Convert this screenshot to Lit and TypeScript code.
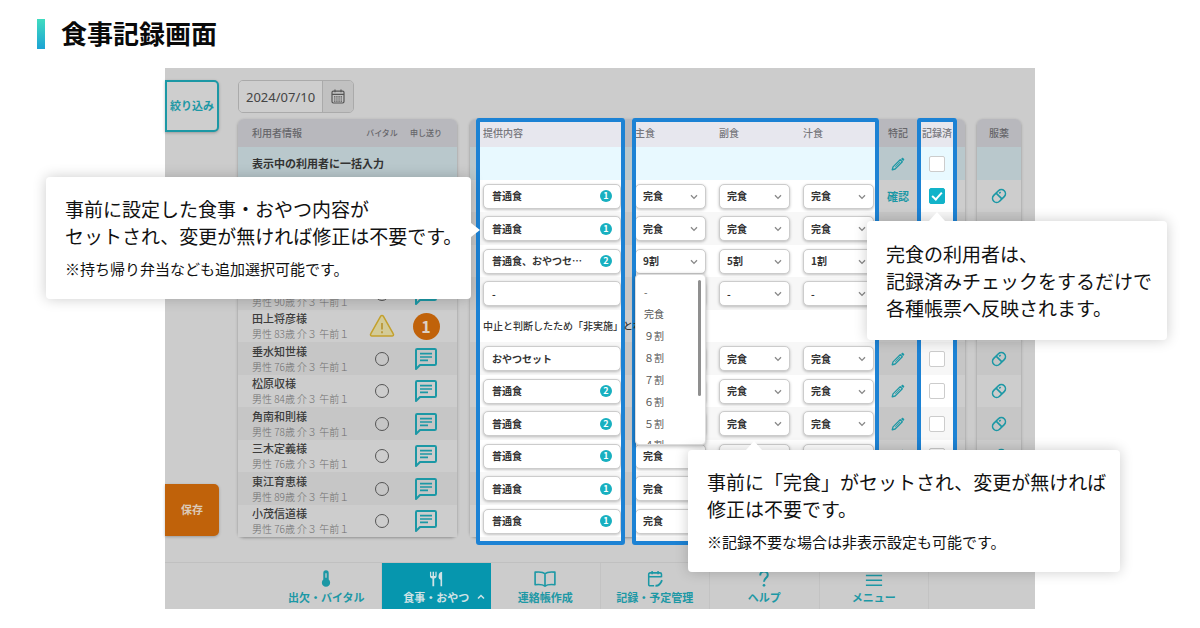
import { LitElement, html, svg, css, nothing } from "lit";
import { customElement, state } from "lit/decorators.js";
import { classMap } from "lit/directives/class-map.js";

type Vital = "normal" | "alert";

interface Resident {
  name: string;
  profile: string;
  vital: Vital;
  unread?: number;
  menu: string;
  menuCount?: number;
  stopped?: boolean;
  amounts: [string, string, string];
  noted?: boolean;
  recorded?: boolean;
}

const residents: Resident[] = [
  { name: "", profile: "", vital: "normal", menu: "普通食", menuCount: 1, amounts: ["完食", "完食", "完食"], noted: true, recorded: true },
  { name: "", profile: "", vital: "normal", menu: "普通食", menuCount: 1, amounts: ["完食", "完食", "完食"] },
  { name: "", profile: "", vital: "normal", menu: "普通食、おやつセ…", menuCount: 2, amounts: ["9割", "5割", "1割"] },
  { name: "", profile: "男性 90歳 介３ 午前１", vital: "normal", menu: "-", amounts: ["-", "-", "-"] },
  { name: "田上将彦様", profile: "男性 83歳 介３ 午前１", vital: "alert", unread: 1, menu: "中止と判断したため「非実施」とな", stopped: true, amounts: ["", "", ""] },
  { name: "垂水知世様", profile: "男性 76歳 介３ 午前１", vital: "normal", menu: "おやつセット", amounts: ["完食", "完食", "完食"] },
  { name: "松原収様", profile: "男性 84歳 介３ 午前１", vital: "normal", menu: "普通食", menuCount: 2, amounts: ["完食", "完食", "完食"] },
  { name: "角南和則様", profile: "男性 78歳 介３ 午前１", vital: "normal", menu: "普通食", menuCount: 2, amounts: ["完食", "完食", "完食"] },
  { name: "三木定義様", profile: "男性 76歳 介３ 午前１", vital: "normal", menu: "普通食", menuCount: 1, amounts: ["完食", "完食", "完食"] },
  { name: "東江育恵様", profile: "男性 89歳 介３ 午前１", vital: "normal", menu: "普通食", menuCount: 1, amounts: ["完食", "完食", "完食"] },
  { name: "小茂信道様", profile: "男性 76歳 介３ 午前１", vital: "normal", menu: "普通食", menuCount: 1, amounts: ["完食", "完食", "完食"] },
];

const dishes = ["主食", "副食", "汁食"];
const menuChoices = ["-", "完食", "９割", "８割", "７割", "６割", "５割", "４割"];
const openRow = 2;

const chevron = html`<svg class="chevron" viewBox="0 0 8 6" aria-hidden="true"><path d="M1 1.2 4 4.4 7 1.2" fill="none" stroke="currentColor" stroke-width="1.3" /></svg>`;

const calendarIcon = html`<svg class="calendar" viewBox="0 0 14 15" aria-hidden="true">
  <rect x="1" y="2.2" width="12" height="11.8" rx="1.4" fill="none" stroke="currentColor" stroke-width="1.2" />
  <path d="M1 5.4h12M4 .6v2.6M10 .6v2.6" stroke="currentColor" stroke-width="1.2" fill="none" />
  <path d="M3 7.9h8M3 10h8M3 12.1h8" stroke="currentColor" stroke-width="1.1" stroke-dasharray="1.4 .8" />
</svg>`;

const chatIcon = html`<svg class="chat" viewBox="0 0 24 24" aria-hidden="true">
  <path d="M2 22V3.2C2 2.5 2.5 2 3.2 2h17.6c.7 0 1.2.5 1.2 1.2v13.6c0 .7-.5 1.200-1.200 1.200H6z" fill="none" stroke="currentColor" stroke-width="2" stroke-linejoin="round" />
  <path d="M6 6.700h12M6 10h12M6 13.300h8" stroke="currentColor" stroke-width="1.700" />
</svg>`;

const warningIcon = html`<svg class="warning" viewBox="0 0 26 24" role="img" aria-label="注意">
  <path d="M11.700 2.200c.6-1 2-1 2.600 0l10 17.600c.6 1-.1 2.200-1.300 2.200H3c-1.200 0-1.900-1.200-1.300-2.200z" fill="#d3cb98" stroke="#c3a02c" stroke-width="1.500" />
  <path d="M13 9v6.500M13 17.300v1.900" stroke="#b58f25" stroke-width="1.500" />
</svg>`;

const pencilIcon = html`<svg class="pencil" viewBox="0 0 14 14" aria-hidden="true">
  <path d="M1.200 12.800 2 9.900 9.200 2.700l2.100 2.100L4.100 12z" fill="none" stroke="currentColor" stroke-width="1.300" stroke-linejoin="round" />
  <path d="M10 1.900 11 .9c.3-.3.800-.3 1.100 0l1 1c.3.3.3.800 0 1.100l-1 1zM1 13l.5-2 1.500 1.500z" fill="currentColor" />
  <path d="M4.200 9.800 9 5" stroke="currentColor" stroke-width=".8" />
</svg>`;

const pillIcon = html`<svg class="pill" viewBox="0 0 16 16" aria-hidden="true">
  <g transform="rotate(-45 8 8)" fill="none" stroke="currentColor" stroke-width="1.600">
    <rect x=".6" y="3.900" width="14.800" height="8.200" rx="4.100" />
    <path d="M8 3.900v8.200M10 6.300h2" />
  </g>
</svg>`;

const navIcons: Record<string, unknown> = {
  thermometer: svg`<path d="M7 3.400a3 3 0 0 1 6 0v7.200a4.600 4.600 0 1 1-6 0z" fill="currentColor"/><path d="M10 3.500v5" stroke="#ccc" stroke-width="1.400"/>`,
  cutlery: svg`<path d="M3.300 2v4.600c0 1.800 1 2.600 2.700 2.800V18h2V9.400c1.700-.2 2.700-1 2.700-2.800V2H9.300v4.600H7.800V2H6.200v4.600H4.700V2zM16.800 2c-2.800 0-4 2.400-4 5.200 0 2 .8 3.200 2.200 3.600V18h1.800z" fill="currentColor"/>`,
  book: svg`<path d="M10 4.200C7.800 2 3.700 1.900-1 2.400v14c4.700-.5 8.800-.2 11 1.600 2.200-1.800 6.300-2.100 11-1.600v-14C16.300 1.900 12.200 2 10 4.200zM10 4.200V18" fill="none" stroke="currentColor" stroke-width="1.800" stroke-linejoin="round"/>`,
  schedule: svg`<path d="M9 17.600H4.600c-1 0-1.600-.6-1.600-1.600V4.800c0-1 .6-1.600 1.600-1.600h11c1 0 1.600.6 1.600 1.600V8M3 7.400h14.200M6.800 1v3.600M13.400 1v3.600" fill="none" stroke="currentColor" stroke-width="1.700"/><path d="M10.500 17.500c3 .2 5.500-1.500 7.300-6.300" fill="none" stroke="currentColor" stroke-width="2"/>`,
  help: svg`<path d="M5.800 6c0-2.600 1.700-4.200 4.200-4.200s4.200 1.500 4.200 3.700c0 3.300-4.200 3.700-4.200 7.500" fill="none" stroke="currentColor" stroke-width="2.200"/><circle cx="10" cy="17" r="1.500" fill="currentColor"/>`,
  menu: svg`<path d="M1 6h18M1 11.500h18M1 17h18" stroke="currentColor" stroke-width="1.700"/>`,
};

const navItems = [
  { icon: "thermometer", label: "出欠・バイタル" },
  { icon: "cutlery", label: "食事・おやつ", active: true },
  { icon: "book", label: "連絡帳作成" },
  { icon: "schedule", label: "記録・予定管理" },
  { icon: "help", label: "ヘルプ" },
  { icon: "menu", label: "メニュー" },
];

@customElement("app-root")
export class AppRoot extends LitElement {
  @state() private rows = residents;

  static styles = css`
    :host {
      display: block;
      background: #fff;
      color: #111;
      font-family: "Noto Sans CJK JP", "Noto Sans", sans-serif;
      --teal: #1c98a5;
      --frame: #1c82d4;
    }
    *, *::before, *::after { box-sizing: border-box; }
    button, input, select { font: inherit; color: inherit; margin: 0; }
    svg { display: block; flex: none; }
    .heading {
      display: flex;
      align-items: center;
      gap: 16px;
      padding: 19px 36px 19px 37px;
    }
    .heading::before {
      content: "";
      width: 8px;
      height: 30px;
      background: linear-gradient(#40dcc0, #1ca3d4);
    }
    h1 { margin: 0; padding-bottom: 2px; font-size: 26px; line-height: 28px; font-weight: 700; color: #0a0a0a; }
    .stage { position: relative; max-width: 870px; margin: 0 auto; }
    .screen { background: #ccc; }
    .workspace { display: flex; gap: 19px; padding: 12px 14px 25px 0; }
    .side {
      display: flex;
      flex-direction: column;
      justify-content: space-between;
      width: 54px;
      padding-bottom: 1px;
    }
    .side button {
      height: 52px;
      padding: 0 0 2px;
      border-radius: 0 5px 5px 0;
      font-size: 11px;
      font-weight: 700;
      box-shadow: 0 1px 3px rgba(0, 0, 0, 0.25);
    }
    .filter { border: 2px solid var(--teal); background: #cecece; color: var(--teal); }
    .side .save { border: 0; background: #c0620a; color: #dccab8; }
    .main { flex: 1; min-width: 0; }
    .date {
      display: flex;
      width: 116px;
      height: 33px;
      border: 1px solid #aaa;
      border-radius: 5px;
      overflow: hidden;
    }
    .date input {
      width: 83px;
      padding: 0 0 0 7px;
      border: 0;
      background: #cecece;
      font-family: "Noto Sans", sans-serif;
      font-size: 13px;
      color: #444;
      outline: 0;
    }
    .date button {
      flex: 1;
      display: grid;
      place-items: center;
      padding: 0;
      border: 0;
      border-left: 1px solid #aaa;
      background: #c1c1c1;
      color: #555;
    }
    .calendar { width: 14px; height: 15px; }
    .panels { display: flex; gap: 13px; margin-top: 6px; }
    .panel { position: relative; border-radius: 6px; box-shadow: 0 1px 3px rgba(0, 0, 0, 0.3); }
    .panel + .panel + .panel { margin-left: -1px; }
    table { border-collapse: collapse; table-layout: fixed; width: 100%; }
    th, td { padding: 0; text-align: left; vertical-align: middle; line-height: 16px; }
    .users { width: 219px; }
    .meals { width: 495px; }
    .medicine { width: 44px; }
    thead tr { height: 28px; background: #b8b8bd; border-radius: 6px 6px 0 0; }
    thead th { padding-bottom: 1px; font-size: 10px; font-weight: 500; color: #66666a; white-space: nowrap; }
    thead th:first-child { border-top-left-radius: 6px; }
    thead th:last-child { border-top-right-radius: 6px; }
    thead th.small { font-size: 8px; }
    .bulk { height: 33px; background: #b9c8cc; }
    .bulk th { padding-bottom: 2px; font-size: 11px; font-weight: 700; color: #333; }
    .row { height: 32px; background: #cdcdcd; }
    .row.even { height: 33px; background: #c6c6c6; }
    thead .lit { background: #e7e7ee; color: #77777c; }
    .bulk .lit { background: #e8f9ff; }
    .row .lit { background: #fff; }
    .row.even .lit { background: #f7f7f7; }
    .users .lead { padding-left: 14px; }
    .center { text-align: center; }
    .center > svg, .center > button > svg { margin: 0 auto; }
    .name { font-size: 11px; font-weight: 500; color: #3c3c3c; line-height: 16px; height: 16px; }
    .profile { font-size: 10px; font-weight: 300; color: #6e6e6e; line-height: 16px; height: 16px; white-space: nowrap; }
    .ok {
      display: block;
      width: 14px;
      height: 14px;
      margin: 0 auto;
      border: 1px solid #555;
      border-radius: 50%;
    }
    .chat { width: 24px; height: 24px; }
    .warning { width: 26px; height: 24px; }
    .plain { display: block; width: 100%; padding: 0; border: 0; background: none; color: var(--teal); }
    .count {
      display: grid;
      place-items: center;
      width: 27px;
      height: 27px;
      margin: 0 auto;
      border-radius: 50%;
      background: #c0620a;
      color: #ddd0c4;
      font-size: 16px;
      font-weight: 700;
    }
    .dish { padding-left: 3px; }
    .offer { padding-left: 7px; }
    .field {
      display: flex;
      align-items: center;
      justify-content: space-between;
      height: 25px;
      padding: 0 8px;
      border: 1px solid #ccc;
      border-radius: 5px;
      background: #fff;
      box-shadow: 0 1px 3px rgba(0, 0, 0, 0.25);
      color: #333;
      font-size: 10px;
      font-weight: 700;
      line-height: 16px;
      white-space: nowrap;
    }
    .menu { width: 138px; }
    .badge {
      display: grid;
      place-items: center;
      width: 12px;
      height: 12px;
      border-radius: 50%;
      background: #18b0c0;
      color: #fff;
      font-size: 9px;
      line-height: 12px;
    }
    .notice { position: relative; z-index: 3; display: block; width: 138px; font-size: 10px; font-weight: 500; color: #333; white-space: nowrap; }
    .amount { position: relative; width: 71px; }
    .amount select {
      display: block;
      appearance: none;
      width: 100%;
      height: 25px;
      padding: 0 0 0 7px;
      border: 1px solid #ccc;
      border-radius: 5px;
      background: #fff;
      box-shadow: 0 1px 3px rgba(0, 0, 0, 0.25);
      color: #333;
      font-size: 10px;
      font-weight: 700;
    }
    .chevron { position: absolute; right: 8px; top: 10px; width: 8px; height: 6px; color: #888; pointer-events: none; }
    .options {
      position: absolute;
      z-index: 4;
      top: 25px;
      left: 0;
      width: 71px;
      margin: 0;
      padding: 6px 0 0 8px;
      overflow: hidden;
      list-style: none;
      background: #fff;
      border: 1px solid #ddd;
      border-radius: 4px;
      box-shadow: 0 1px 4px rgba(0, 0, 0, 0.35);
      font-size: 10px;
      color: #555;
      height: 171px;
    }
    .options li { line-height: 22px; height: 22px; }
    .options li + li { margin-top: 0; }
    .options li:last-child { line-height: 20px; height: 20px; }
    .options::after {
      content: "";
      position: absolute;
      top: 5px;
      right: 4px;
      width: 3px;
      height: 116px;
      border-radius: 2px;
      background: #8f8f8f;
    }
    .pencil { width: 14px; height: 14px; }
    .pill { width: 16px; height: 16px; }
    .confirm { font-size: 11px; font-weight: 700; line-height: 16px; }
    .tick {
      appearance: none;
      display: block;
      width: 16px;
      height: 16px;
      margin: 0 auto;
      border: 1px solid #ccc;
      border-radius: 2px;
      background: #fff;
    }
    .tick:checked {
      border-color: #12b3c9;
      background: #12b3c9;
      position: relative;
    }
    .tick:checked::after {
      content: "";
      position: absolute;
      left: 4px;
      top: 1px;
      width: 6px;
      height: 10px;
      border: solid #fff;
      border-width: 0 2px 2px 0;
      transform: rotate(42deg);
    }
    .frame {
      position: absolute;
      z-index: 2;
      top: -1px;
      bottom: -8px;
      border: 4px solid var(--frame);
      border-radius: 3px;
      background: linear-gradient(#f3f3f3, #f3f3f3) bottom / 100% 4px no-repeat;
      pointer-events: none;
    }
    .frame.offerings { left: 6px; width: 149px; }
    .frame.dishes { left: 162px; width: 247px; }
    .frame.done { left: 447px; width: 40px; }
    nav {
      display: grid;
      grid-template-columns: 107px repeat(6, 1fr) 106px;
      border-top: 1px solid #c0c0c0;
    }
    nav::before { content: ""; }
    nav a {
      position: relative;
      display: flex;
      flex-direction: column;
      align-items: center;
      height: 46px;
      padding-top: 7px;
      border-right: 1px solid #c3c3c3;
      color: var(--teal);
      font-size: 11px;
      font-weight: 700;
      line-height: 16px;
      text-decoration: none;
      white-space: nowrap;
    }
    nav svg { width: 18px; height: 18px; margin-bottom: 1px; overflow: visible; }
    nav .active { background: #0696ae; color: #d0e2e5; border: 0; }
    nav .active .caret { position: absolute; right: 6px; top: 31px; width: 8px; height: 6px; margin: 0; }
    .callout {
      position: absolute;
      z-index: 10;
      padding: 18px 19px;
      border-radius: 4px;
      background: #fff;
      box-shadow: 0 0 14px rgba(0, 0, 0, 0.2);
      color: #111;
      font-size: 19px;
      line-height: 27px;
      white-space: nowrap;
    }
    .callout p { margin: 0; }
    .callout .note { margin-top: 8px; font-size: 15px; line-height: 24px; }
    .callout::after {
      content: "";
      position: absolute;
      border: 0 solid transparent;
      border-width: 0 8px 9px;
      border-bottom-color: #fff;
    }
    .c-offer { left: -119px; top: 109px; width: 425px; height: 122px; }
    .c-offer::after {
      left: 100%;
      top: 46px;
      border-width: 7px 0 7px 9px;
      border-color: transparent transparent transparent #fff;
    }
    .c-done { left: 702px; top: 153px; width: 300px; height: 119px; padding-top: 19px; }
    .c-done::after { left: 62px; bottom: 100%; }
    .c-dish { left: 523px; top: 382px; width: 432px; height: 122px; }
    .c-dish::after { left: 58px; bottom: 100%; }
  `;

  private rowClass(i: number) {
    return classMap({ row: true, even: i % 2 === 1 });
  }

  private toggle(i: number, e: Event) {
    const recorded = (e.target as HTMLInputElement).checked;
    this.rows = this.rows.map((r, n) => (n === i ? { ...r, recorded } : r));
  }

  private usersPanel() {
    return html`<section class="panel users">
      <table>
        <colgroup><col style="width:122px" /><col style="width:44px" /><col style="width:44px" /><col /></colgroup>
        <thead><tr>
          <th class="lead">利用者情報</th><th class="small center">バイタル</th><th class="small center">申し送り</th><th></th>
        </tr></thead>
        <tbody>
          <tr class="bulk"><th class="lead" colspan="4">表示中の利用者に一括入力</th></tr>
          ${this.rows.map((r, i) => html`<tr class=${this.rowClass(i)}>
            <td class="lead"><div class="name">${r.name}</div><div class="profile">${r.profile}</div></td>
            <td class="center">${r.vital === "alert" ? warningIcon : html`<span class="ok" role="img" aria-label="正常"></span>`}</td>
            <td class="center">${r.unread
              ? html`<span class="count">${r.unread}</span>`
              : html`<button class="plain" aria-label="申し送り">${chatIcon}</button>`}</td>
            <td></td>
          </tr>`)}
        </tbody>
      </table>
    </section>`;
  }

  private amount(value: string, dish: string, open: boolean) {
    if (!value) return nothing;
    return html`<div class="amount">
      <select aria-label=${dish}><option>${value}</option></select>${chevron}
      ${open ? html`<ul class="options" role="listbox" aria-label=${dish}>
        ${menuChoices.map((c) => html`<li role="option">${c}</li>`)}
      </ul>` : nothing}
    </div>`;
  }

  private mealsPanel() {
    return html`<section class="panel meals">
      <table>
        <colgroup>
          <col style="width:6px" /><col style="width:149px" /><col style="width:7px" />
          <col style="width:84px" /><col style="width:84px" /><col style="width:79px" />
          <col style="width:38px" /><col style="width:40px" /><col style="width:8px" />
        </colgroup>
        <thead><tr>
          <th></th><th class="lit offer">提供内容</th><th></th>
          ${dishes.map((d) => html`<th class="lit dish">${d}</th>`)}
          <th class="center">特記</th><th class="lit center">記録済</th><th></th>
        </tr></thead>
        <tbody>
          <tr class="bulk">
            <td></td><td class="lit"></td><td></td><td class="lit" colspan="3"></td>
            <td class="center"><button class="plain" aria-label="特記を一括入力">${pencilIcon}</button></td>
            <td class="lit"><input class="tick" type="checkbox" aria-label="一括で記録済にする" /></td><td></td>
          </tr>
          ${this.rows.map((r, i) => html`<tr class=${this.rowClass(i)}>
            <td></td>
            <td class="lit offer">${r.stopped
              ? html`<span class="notice">${r.menu}</span>`
              : html`<button class="field menu"><span>${r.menu}</span>${r.menuCount ? html`<span class="badge">${r.menuCount}</span>` : nothing}</button>`}</td>
            <td></td>
            ${r.amounts.map((a, n) => html`<td class="lit dish">${this.amount(a, dishes[n], i === openRow && n === 0)}</td>`)}
            <td class="center">${r.stopped ? nothing : html`<button class="plain confirm" aria-label="特記">${r.noted ? "確認" : pencilIcon}</button>`}</td>
            <td class="lit">${r.stopped ? nothing : html`<input class="tick" type="checkbox" aria-label="記録済" .checked=${!!r.recorded} @change=${(e: Event) => this.toggle(i, e)} />`}</td>
            <td></td>
          </tr>`)}
        </tbody>
      </table>
      <div class="frame offerings"></div>
      <div class="frame dishes"></div>
      <div class="frame done"></div>
    </section>`;
  }

  private medicinePanel() {
    return html`<section class="panel medicine">
      <table>
        <thead><tr><th class="center">服薬</th></tr></thead>
        <tbody>
          <tr class="bulk"><td></td></tr>
          ${this.rows.map((r, i) => html`<tr class=${this.rowClass(i)}>
            <td class="center">${r.stopped ? nothing : html`<button class="plain" aria-label="服薬">${pillIcon}</button>`}</td>
          </tr>`)}
        </tbody>
      </table>
    </section>`;
  }

  render() {
    return html`
      <header class="heading"><h1>食事記録画面</h1></header>
      <div class="stage">
        <div class="screen">
          <div class="workspace">
            <div class="side">
              <button class="filter">絞り込み</button>
              <button class="save">保存</button>
            </div>
            <main class="main">
              <div class="date">
                <input type="text" aria-label="日付" value="2024/07/10" />
                <button aria-label="カレンダーを開く">${calendarIcon}</button>
              </div>
              <div class="panels">${this.usersPanel()}${this.mealsPanel()}${this.medicinePanel()}</div>
            </main>
          </div>
          <nav>
            ${navItems.map((n) => html`<a href="#" class=${n.active ? "active" : ""}>
              <svg viewBox="0 0 20 20" aria-hidden="true">${navIcons[n.icon]}</svg>
              <span>${n.label}</span>
              ${n.active ? html`<svg class="caret" viewBox="0 0 8 6" aria-hidden="true"><path d="M1 4.600 4 1.500 7 4.600" fill="none" stroke="currentColor" stroke-width="1.500" /></svg>` : nothing}
            </a>`)}
          </nav>
        </div>
        <aside class="callout c-offer">
          <p>事前に設定した食事・おやつ内容が<br />セットされ、変更が無ければ修正は不要です。</p>
          <p class="note">※持ち帰り弁当なども追加選択可能です。</p>
        </aside>
        <aside class="callout c-done">
          <p>完食の利用者は、<br />記録済みチェックをするだけで<br />各種帳票へ反映されます。</p>
        </aside>
        <aside class="callout c-dish">
          <p>事前に「完食」がセットされ、変更が無ければ<br />修正は不要です。</p>
          <p class="note">※記録不要な場合は非表示設定も可能です。</p>
        </aside>
      </div>
    `;
  }
}
